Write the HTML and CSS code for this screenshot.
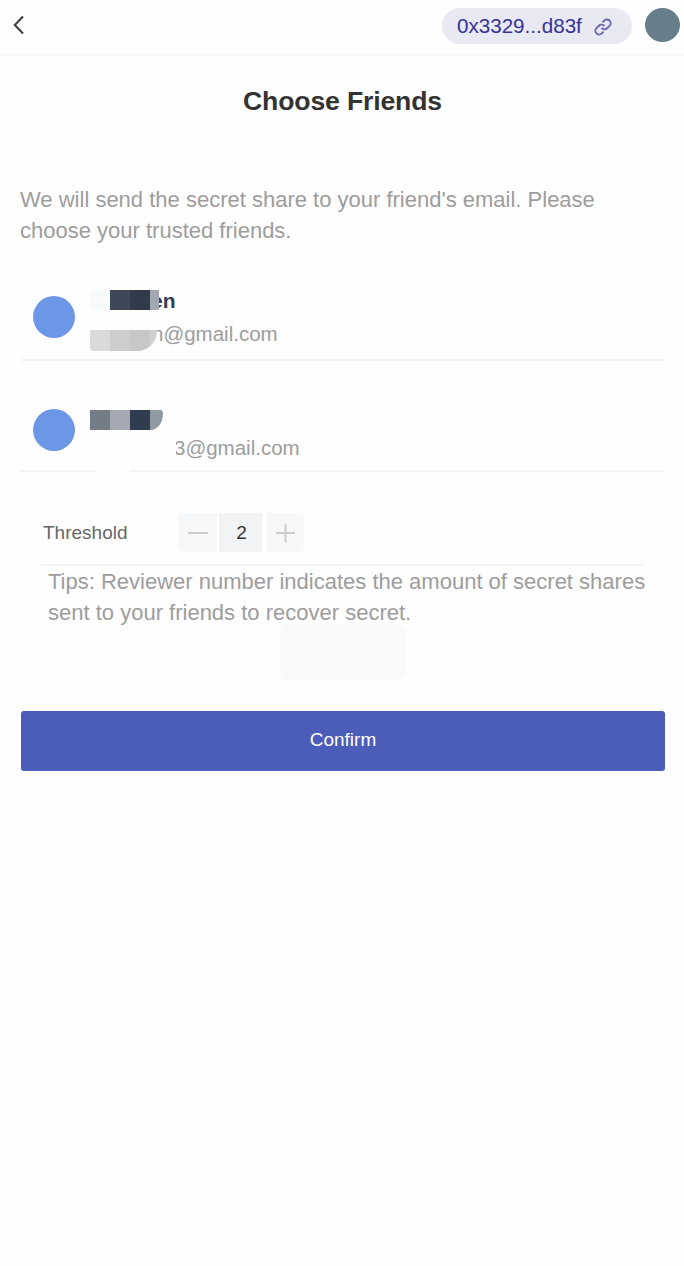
FILE: index.html
```html
<!DOCTYPE html>
<html lang="en">
<head>
<meta charset="utf-8">
<title>Choose Friends</title>
<link rel="stylesheet" href="styles.css">
</head>
<body>
<header class="topbar">
  <svg class="back" width="14" height="22" viewBox="0 0 14 22"><path d="M12 2.5 3.8 11l8.2 8.5"/></svg>
  <div class="wallet">
    <span>0x3329...d83f</span>
    <svg class="link" width="18" height="18" viewBox="0 0 24 24"><path d="M10 13.2a5 5 0 0 0 7.5.5l3.2-3.2a5 5 0 0 0-7.1-7.1l-2.4 2.4"/><path d="M14 10.8a5 5 0 0 0-7.5-.5l-3.2 3.2a5 5 0 0 0 7.1 7.1l2.4-2.4"/></svg>
  </div>
  <div class="account"></div>
</header>
<main class="page">
  <h1 class="title">Choose Friends</h1>
  <p class="intro">We will send the secret share to your friend's email. Please choose your trusted friends.</p>
  <section class="friend">
    <div class="avatar"></div>
    <div class="details">
      <div class="name">en</div>
      <div class="email email-first">n@gmail.com</div>
      <div class="mask mask-letter"></div>
      <div class="mask mask-name"></div>
      <div class="mask mask-email"></div>
    </div>
  </section>
  <section class="friend friend-second">
    <div class="avatar"></div>
    <div class="details">
      <div class="name"></div>
      <div class="email email-second">3@gmail.com</div>
      <div class="mask mask-second"></div>
      <div class="mask mask-digit"></div>
    </div>
    <div class="line-gap"></div>
  </section>
  <section class="threshold">
    <span class="label">Threshold</span>
    <div class="stepper">
      <button class="step minus"><svg width="20" height="20" viewBox="0 0 20 20"><path d="M0 10h20"/></svg></button>
      <span class="value">2</span>
      <button class="step plus"><svg width="20" height="20" viewBox="0 0 20 20"><path d="M0 10h19M9.5 .5v19"/></svg></button>
    </div>
  </section>
  <p class="tips">Tips: Reviewer number indicates the amount of secret shares sent to your friends to recover secret.</p>
  <div class="placeholder"></div>
  <button class="confirm">Confirm</button>
</main>
</body>
</html>
```
FILE: styles.css
```css
* { box-sizing: border-box; }
body {
  margin: 0;
  background: #fefefe;
  font-family: "Liberation Sans", Arial, sans-serif;
}
button { border: 0; padding: 0; font-family: inherit; }
svg { display: block; fill: none; }
.topbar {
  display: flex;
  height: 56px;
  padding: 8px 4px 0 11px;
  border-bottom: 2px solid #f9f9f9;
}
.back { margin-top: 6px; stroke: #3d3d3d; stroke-width: 2; }
.wallet {
  display: flex;
  align-items: center;
  width: 190px;
  height: 36px;
  margin-left: auto;
  padding-left: 15px;
  border-radius: 18px;
  background: #e9e9f3;
  color: #34349a;
  font-size: 20.6px;
}
.link { margin: 1px 0 0 12px; stroke: #6666b2; stroke-width: 2.5; }
.account {
  width: 35px;
  height: 34px;
  margin-left: 13px;
  border-radius: 50%;
  background: #667d8a;
}
.page { padding: 0 19px 0 20px; }
.title {
  margin: 30px 0 0;
  color: #333;
  font-size: 26.6px;
  letter-spacing: -0.15px;
  line-height: 30px;
  text-align: center;
}
.intro {
  margin: 68px 0 0;
  color: #9d9d9d;
  font-size: 22px;
  line-height: 31px;
}
.friend {
  display: flex;
  position: relative;
  height: 71px;
  margin-top: 44px;
  padding: 6px 0 0 13px;
  border-bottom: 2px solid #f3f3f3;
}
.avatar {
  width: 42px;
  height: 42px;
  border-radius: 50%;
  background: #6c96e6;
}
.details { position: relative; margin: -6px 0 0 15px; }
.name {
  height: 22px;
  padding-left: 61px;
  color: #313e53;
  font-size: 21px;
  font-weight: bold;
  line-height: 22px;
}
.email { margin-top: 10px; color: #9d9d9d; font-size: 20.5px; line-height: 24px; }
.email-first { padding-left: 62px; }
.mask { position: absolute; }
.mask-letter { top: 36px; left: 60px; width: 6px; height: 20px; background: #fefefe; }
.mask-name {
  top: 0;
  left: 0;
  width: 69px;
  height: 20px;
  background: linear-gradient(to right, #f8fbfa 20px, #3d4958 20px 40px, #303b4b 40px 60px, #a2a8b1 60px);
}
.mask-email {
  top: 40px;
  left: 0;
  width: 67px;
  height: 21px;
  border-radius: 0 0 20px 4px;
  background: linear-gradient(to right, #dadada 20px, #cdcdcd 20px 40px, #c7c7c7 40px 60px, #d1d1d1 60px);
}
.friend-second { height: 69px; margin-top: 42px; }
.email-second { margin-top: 11px; padding-left: 84px; }
.mask-second {
  top: 7px;
  left: 0;
  width: 73px;
  height: 20px;
  border-radius: 0 3px 13px 0 / 0 4px 17px 0;
  background: linear-gradient(to right, #747c87 20px, #a3a8b3 20px 40px, #303d4f 40px 60px, #909aa2 60px);
}
.mask-digit { top: 32px; left: 81px; width: 5px; height: 24px; background: #fefefe; }
.line-gap {
  position: absolute;
  left: 75px;
  bottom: -2px;
  width: 35px;
  height: 2px;
  background: #fefefe;
}
.threshold {
  display: flex;
  align-items: center;
  height: 53px;
  margin: 41px 22px 0 21px;
  padding: 0 0 13px 2px;
  border-bottom: 2px solid #f3f3f3;
}
.label { width: 135px; padding-top: 1px; color: #666; font-size: 19px; }
.stepper { display: flex; gap: 2px; color: #333; font-size: 19px; }
.step, .value { display: grid; place-items: center; height: 39px; }
.step { width: 39px; padding-top: 1px; background: #f7f8fa; stroke: #cbcccd; stroke-width: 2; }
.minus { border-radius: 5px 0 0 5px; }
.plus { width: 37px; margin-left: 3px; border-radius: 0 5px 5px 0; }
.value { width: 43px; padding: 1px 0 0 2px; background: #f2f3f5; }
.tips {
  margin: 0;
  padding-left: 28px;
  color: #9d9d9d;
  font-size: 22px;
  line-height: 31px;
}
.placeholder { width: 126px; height: 56px; margin: -4px auto 0; border-radius: 8px; background: #fafafa; }
.confirm {
  display: block;
  width: 644px;
  height: 60px;
  margin: 31px 0 0 1px;
  border-radius: 3px;
  background: #4b5cb9;
  color: #fff;
  font-size: 19px;
  padding-bottom: 3px;
}
```
